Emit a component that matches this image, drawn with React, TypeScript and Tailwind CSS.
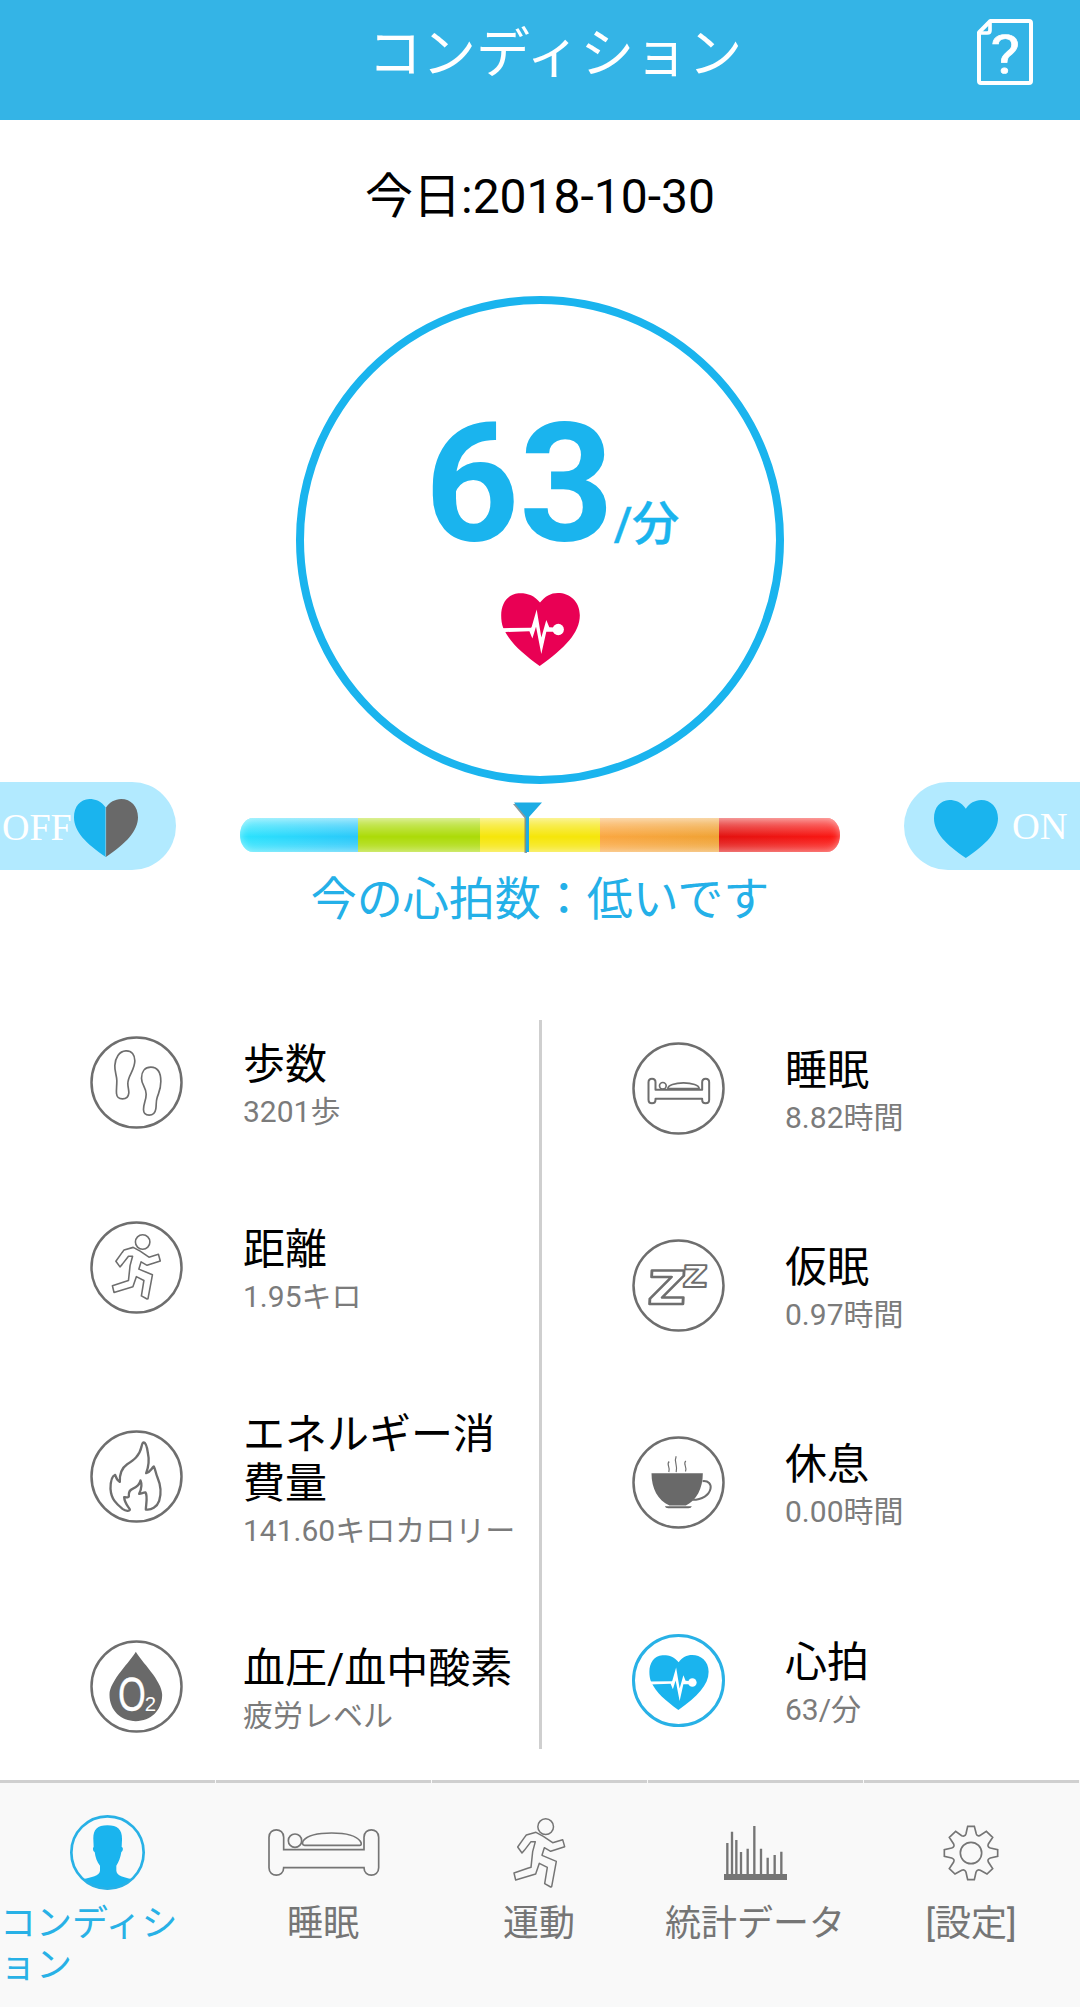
import type { ReactNode } from "react";

const GRAY = "#6e6e6e";
const BLUE = "#1ab4ee";

function HelpIcon() {
  return (
    <svg className="h-[66px] w-[56px]" viewBox="0 0 168 198" fill="none" stroke="#fff" strokeWidth="12">
      <path d="M40 6H156Q162 6 162 12V186Q162 192 156 192H12Q6 192 6 186V40Z" strokeLinejoin="round" />
      <path d="M39 8V34Q39 42 31 42H8" strokeWidth="11" />
      <text transform="translate(85 161) scale(1.16 1)" textAnchor="middle" fill="#fff" stroke="#fff" strokeWidth="2" fontFamily="Roboto" fontWeight="400" fontSize="161">
        ?
      </text>
    </svg>
  );
}

function PulseHeart({ className, color }: { className: string; color: string }) {
  return (
    <svg className={className} viewBox="663 938 237 220">
      <path
        fill={color}
        d="M780 967C762 945 742 938 715 939C683 942 663 968 663 1005C663 1020 665 1032 669 1043C690 1090 730 1122 779 1158C855 1104 900 1058 900 1005C900 962 868 938 834 938C812 938 795 948 780 967Z"
      />
      <path
        fill="#fff"
        d="M660 1044L753 1043L755 1040L770 988L784 1072L799 1019L808 1041L822 1042V1055H799L784 1122L768 1040L757 1075L748 1053L660 1056Z"
      />
      <circle cx="835" cy="1048" r="17" fill="#fff" />
    </svg>
  );
}

const HEART = "M93 26C80 6 62 0 45 0C18 2 0 22 0 55C0 98 35 134 93 174C152 134 187 96 187 55C187 22 166 0 138 0C119 1 104 9 93 26Z";

function HalfHeart() {
  return (
    <svg className="mt-[3px] h-[58px] w-[64px]" viewBox="0 0 187 174" preserveAspectRatio="none">
      <defs>
        <linearGradient id="half">
          <stop offset="0.495" stopColor={BLUE} />
          <stop offset="0.495" stopColor="#696969" />
        </linearGradient>
      </defs>
      <path fill="url(#half)" d={HEART} />
      <path d="M92.5 26V172" stroke="#a5cfe0" strokeWidth="2" />
    </svg>
  );
}

function FullHeart() {
  return (
    <svg className="mt-[6px] h-[58px] w-[64px]" viewBox="0 0 187 174" preserveAspectRatio="none">
      <path fill={BLUE} d={HEART} />
    </svg>
  );
}

function Ring({ cx, cy, children, color = GRAY, viewBox }: { cx: number; cy: number; viewBox: string; color?: string; children?: ReactNode }) {
  return (
    <svg className="size-[93px] shrink-0" viewBox={viewBox} fill="none" stroke={color} strokeWidth="5" strokeLinejoin="round">
      <circle cx={cx} cy={cy} r="135" strokeWidth="7.5" />
      {children}
    </svg>
  );
}

function StepsIcon() {
  return (
    <Ring cx={200} cy={217} viewBox="60.5 77.5 279 279">
      <path d="M168 122C148 123 136 143 135 166C134 184 141 196 141 212C141 228 139 240 140 250C141 262 149 266 158 266C170 266 176 260 177 248C177 238 174 230 174 220C174 196 195 180 195 152C195 134 186 121 168 122Z" />
      <path d="M243 171C225 171 215 184 215 204C215 224 229 232 229 252C229 270 221 280 221 298C221 311 228 315 238 315C250 315 256 308 258 296C260 284 258 274 262 262C267 246 273 238 273 214C273 188 263 171 243 171Z" />
    </Ring>
  );
}

const RUNNER =
  "M107 80L78 88L72 96L52 124L65 142L72 134L92 108L105 108L97 138L92 185L82 188L41 202L46 223L106 205L117 173L141 185L133 234L151 244L154 243L168 167L125 149L132 126L151 137L193 123L187 102L157 111L129 92Z";

function DistanceIcon() {
  return (
    <Ring cx={200} cy={772} viewBox="60.5 632.5 279 279">
      <g transform="translate(89 636) scale(0.945)">
        <circle cx="137" cy="63" r="23" />
        <path d={RUNNER} />
      </g>
    </Ring>
  );
}

function FlameIcon() {
  return (
    <Ring cx={200} cy={229} viewBox="60.5 89.5 279 279">
      <path
        strokeWidth="7"
        d="M222 127C217 127 216 134 215 140C209 168 191 180 172 192C156 203 149 222 150 245C140 240 139 232 136 224C124 228 122 250 122 266C124 297 140 312 158 326C168 333 180 334 180 328C177 321 164 310 163 291C171 292 176 293 177 288C176 276 178 270 188 266C202 260 210 252 212 241C218 254 216 264 208 281C216 280 222 276 227 277C234 287 229 308 228 328C244 331 262 320 268 302C275 280 274 258 263 232C257 218 257 208 252 199C244 206 242 216 229 219C237 198 239 180 234 158C232 144 230 128 222 127Z"
      />
    </Ring>
  );
}

function OxygenIcon() {
  return (
    <Ring cx={200} cy={859} viewBox="60.5 719.5 279 279">
      <path fill="#696969" stroke="none" d="M198 755C212 782 277 842 277 884C277 932 242 963 198 963C154 963 119 932 119 884C119 842 184 782 198 755Z" />
      <text transform="translate(186 932) scale(0.74 1)" textAnchor="middle" fill="#fff" stroke="#fff" strokeWidth="1" fontFamily="Liberation Sans" fontSize="145">
        O
      </text>
      <text x="242" y="932" textAnchor="middle" fill="#fff" stroke="none" fontFamily="Liberation Sans" fontSize="61">
        2
      </text>
    </Ring>
  );
}

function BedIcon() {
  return (
    <Ring cx={236} cy={205} viewBox="96.5 65.5 279 279">
      <path strokeWidth="6" d="M167 209H307V186C307 172 328 172 328 186V239C328 253 307 253 307 239V236H167V239C167 253 146 253 146 239V186C146 172 167 172 167 186Z" />
      <circle cx="189" cy="197" r="10" />
      <path d="M204 205C204 195 225 188 251 188C277 188 298 195 298 205Z" />
    </Ring>
  );
}

function NapIcon() {
  return (
    <Ring cx={236} cy={796} viewBox="96.5 656.5 279 279">
      <text transform="translate(142 852) skewX(-3) scale(1.14 1)" fill="none" strokeWidth="7.5" fontFamily="DejaVu Sans" fontWeight="700" fontSize="138">
        Z
      </text>
      <text transform="translate(247 800) skewX(-3) scale(1.14 1)" fill="none" strokeWidth="5.5" fontFamily="DejaVu Sans" fontWeight="700" fontSize="90">
        Z
      </text>
    </Ring>
  );
}

function CupIcon() {
  return (
    <Ring cx={236} cy={217} viewBox="96.5 77.5 279 279">
      <path fill="#696969" stroke="none" d="M155 189H309C309 235 290 270 258 286H209C174 270 155 235 155 189ZM195 288H276Q274 294 266 294H205Q197 294 195 288Z" />
      <path strokeWidth="6" d="M308 213C326 211 335 222 332 236C328 254 308 269 278 269" />
      <g strokeWidth="3.5">
        <path d="M208 154C198 164 213 170 207 186M229 138C221 156 235 164 229 186M258 152C248 162 263 168 257 184" />
      </g>
    </Ring>
  );
}

function HeartRateIcon() {
  return (
    <span className="flex size-[93px] shrink-0 items-center justify-center rounded-full border-[3px] border-[#28b1e6] pt-[3px]">
      <PulseHeart className="h-[55px] w-[60px]" color={BLUE} />
    </span>
  );
}

function Metric({ icon, title, value }: { icon: ReactNode; title: string; value: string }) {
  return (
    <div className="flex items-center gap-[60px]">
      {icon}
      <div className="w-[280px] pt-[4px] whitespace-nowrap">
        <div className="text-[42px] leading-[49px] whitespace-normal text-black">{title}</div>
        <div className="mt-[5px] text-[30px] leading-[35px] text-[#7b7b7b]">{value}</div>
      </div>
    </div>
  );
}

function NavPerson() {
  return (
    <svg className="h-[75px] w-[75px]" viewBox="210 165 225 225">
      <clipPath id="face">
        <circle cx="322.5" cy="277.5" r="110" />
      </clipPath>
      <path
        clipPath="url(#face)"
        fill={BLUE}
        d="M322 196C354 196 367 210 366 240L365 261C370 262 370 272 364 276C362 292 356 306 349 317V332C350 348 372 352 395 357V395H250V357C273 352 299 348 300 332V317C291 306 286 292 284 276C278 274 278 263 281 261L280 238C279 210 291 196 322 196Z"
      />
      <circle cx="322.5" cy="277.5" r="108.5" fill="none" stroke="#28b1e6" strokeWidth="8" />
    </svg>
  );
}

function NavBed() {
  return (
    <svg className="ml-px h-[47px] w-[112px]" viewBox="803 207 336 141" fill="none" stroke="#757575" strokeWidth="5">
      <path d="M850 269H1091V232C1091 202 1135 202 1135 232V323C1135 353 1091 353 1091 323H850C850 353 806 353 806 323V232C806 202 850 202 850 232Z" />
      <circle cx="884" cy="242" r="20" />
      <path d="M913 256C905 256 905 247 910 241C922 226 955 219 994 219C1035 219 1068 227 1080 244C1084 250 1084 256 1078 256Z" />
    </svg>
  );
}

function NavRun() {
  return (
    <svg className="h-[70px] w-[53px]" viewBox="38 37 159 210" fill="none" stroke="#757575" strokeWidth="4.5" strokeLinejoin="round">
      <circle cx="136" cy="63" r="23.5" />
      <path d={RUNNER} />
    </svg>
  );
}

function NavStats() {
  return (
    <svg className="h-[54px] w-[63px]" viewBox="672 60 189 162" stroke="#757575" strokeWidth="7">
      <path d="M682 111V206M696 77V206M709 102V206M723 138V206M743 128V206M763 60V206M783 128V206M803 155V206M824 147V206M844 137V206" />
      <path d="M672 213H861" strokeWidth="18" />
    </svg>
  );
}

function NavGear() {
  return (
    <svg className="h-[56px] w-[56px]" viewBox="-84 -84 168 168" fill="none" stroke="#757575" strokeWidth="5">
      <circle r="32" />
      <path d="M-10 -80H10L16 -57Q18 -50 26 -52L46 -65L65 -47L52 -27Q48 -19 58 -15L80 -10V10L58 15Q48 19 52 27L65 47L48 63L28 52Q18 48 15 58L10 80H-10L-15 58Q-18 48 -28 52L-48 63L-65 47L-52 27Q-48 19 -58 15L-80 10V-10L-58 -15Q-48 -19 -52 -27L-65 -47L-46 -65L-28 -52Q-18 -48 -15 -58Z" />
    </svg>
  );
}

function NavItem({ icon, label, active }: { icon: ReactNode; label: ReactNode; active?: boolean }) {
  return (
    <div className="flex w-[216px] flex-col border-r border-[#f9f9f9]">
      <div className="h-[3px] bg-[#d0d0d0]" />
      <div className="flex h-[120px] items-center justify-center pt-[19px] pr-px">{icon}</div>
      <div className={active ? "text-[36px] leading-[42px] text-[#28b1e6]" : "pr-px text-center text-[36px] leading-[42px] text-[#757575]"}>{label}</div>
    </div>
  );
}

function Gauge() {
  return (
    <div className="relative mt-[36px] h-[34px] w-[600px]">
      <div className="flex h-full overflow-hidden rounded-[13px/17px]">
        <div className="w-[118px] bg-linear-to-r from-[#2be3fd] to-[#29c8fa]" />
        <div className="w-[122px] bg-[#acdb08]" />
        <div className="w-[120px] bg-[#f6e60a]" />
        <div className="w-[119px] bg-linear-to-r from-[#faa741] to-[#f0a233]" />
        <div className="w-[121px] bg-linear-to-r from-[#e3110f] to-[#fb1713]" />
      </div>
      <div className="absolute inset-0 rounded-[13px/17px] bg-linear-to-b from-white/45 via-transparent via-55% to-white/25 shadow-[inset_0_0_8px_rgba(255,255,255,0.45)]" />
      <svg className="absolute -top-[17px] left-[272px] h-[53px] w-[32px]" viewBox="0 0 32 53">
        <path d="M1 3H28L15 17V52H12.500V17Z" fill="#6b7f86" opacity="0.8" />
        <path d="M2 1.500H30L17 16V51H14V16Z" fill="#1cace4" />
      </svg>
    </div>
  );
}

export default function App() {
  return (
    <div lang="ja" className="flex h-[2007px] w-[1080px] flex-col overflow-hidden bg-white font-['Roboto','Noto_Sans_CJK_JP',sans-serif]">
      <div className="bg-black">
        <header className="flex h-[120px] items-start rounded-t-[7px/20px] bg-[#34b4e6]">
          <h1 className="mt-[24px] ml-[368px] w-[378px] text-[54px] leading-[62px] whitespace-nowrap text-white">コンディション</h1>
          <div className="mt-[19px] ml-[231px]">
            <HelpIcon />
          </div>
        </header>
      </div>

      <p className="mt-[49px] text-center text-[48px] leading-[56px] text-black">今日:2018-10-30</p>

      <div className="mx-auto mt-[71px] flex size-[488px] shrink-0 flex-col items-center rounded-full border-8 border-[#1ab4ee] text-[#1ab4ee]">
        <div className="mt-[83px] ml-[24px] flex h-[197px] items-baseline whitespace-nowrap">
          <span className="text-[165px] leading-[193px] font-bold">63</span>
          <span className="text-[47px] leading-[56px] font-medium [-webkit-text-stroke:0.4px_#1ab4ee]">/分</span>
        </div>
        <PulseHeart className="mt-[9px] h-[73px] w-[79px]" color="#e90054" />
      </div>

      <div className="-mt-[2px] flex h-[88px] shrink-0 justify-between">
        <div className="flex h-[88px] w-[176px] items-center rounded-r-[44px] bg-[#b2eaff] pl-[2px]">
          <span className="w-[72px] pt-[2px] font-['Liberation_Serif',serif] text-[38px] leading-[46px] text-white">OFF</span>
          <HalfHeart />
        </div>
        <Gauge />
        <div className="flex h-[88px] w-[176px] items-center rounded-l-[44px] bg-[#b2eaff] pl-[30px]">
          <FullHeart />
          <span className="ml-[14px] font-['Liberation_Serif',serif] text-[38.5px] leading-[46px] text-white">ON</span>
        </div>
      </div>

      <p className="mt-[2px] text-center text-[46px] leading-[54px] text-[#24b0e8]">今の心拍数：低いです</p>

      <main className="mt-[64px] flex h-[790px] shrink-0">
        <div className="grid w-[539px] grid-rows-[185px_185px_233px_187px] pl-[90px]">
          <Metric icon={<StepsIcon />} title="歩数" value="3201歩" />
          <Metric icon={<DistanceIcon />} title="距離" value="1.95キロ" />
          <Metric icon={<FlameIcon />} title="エネルギー消費量" value="141.60キロカロリー" />
          <Metric icon={<OxygenIcon />} title="血圧/血中酸素" value="疲労レベル" />
        </div>
        <div className="mt-[30px] h-[729px] w-[3px] bg-[#cfcfcf]" />
        <div className="grid grid-rows-[197px_197px_197px_199px] pl-[90px]">
          <Metric icon={<BedIcon />} title="睡眠" value="8.82時間" />
          <Metric icon={<NapIcon />} title="仮眠" value="0.97時間" />
          <Metric icon={<CupIcon />} title="休息" value="0.00時間" />
          <Metric icon={<HeartRateIcon />} title="心拍" value="63/分" />
        </div>
      </main>

      <nav className="flex h-[227px] shrink-0 bg-[#f9f9f9]">
        <NavItem
          active
          icon={<NavPerson />}
          label={
            <>
              コンディシ
              <br />
              ョン
            </>
          }
        />
        <NavItem icon={<NavBed />} label="睡眠" />
        <NavItem icon={<NavRun />} label="運動" />
        <NavItem icon={<NavStats />} label="統計データ" />
        <NavItem icon={<NavGear />} label="[設定]" />
      </nav>
    </div>
  );
}
